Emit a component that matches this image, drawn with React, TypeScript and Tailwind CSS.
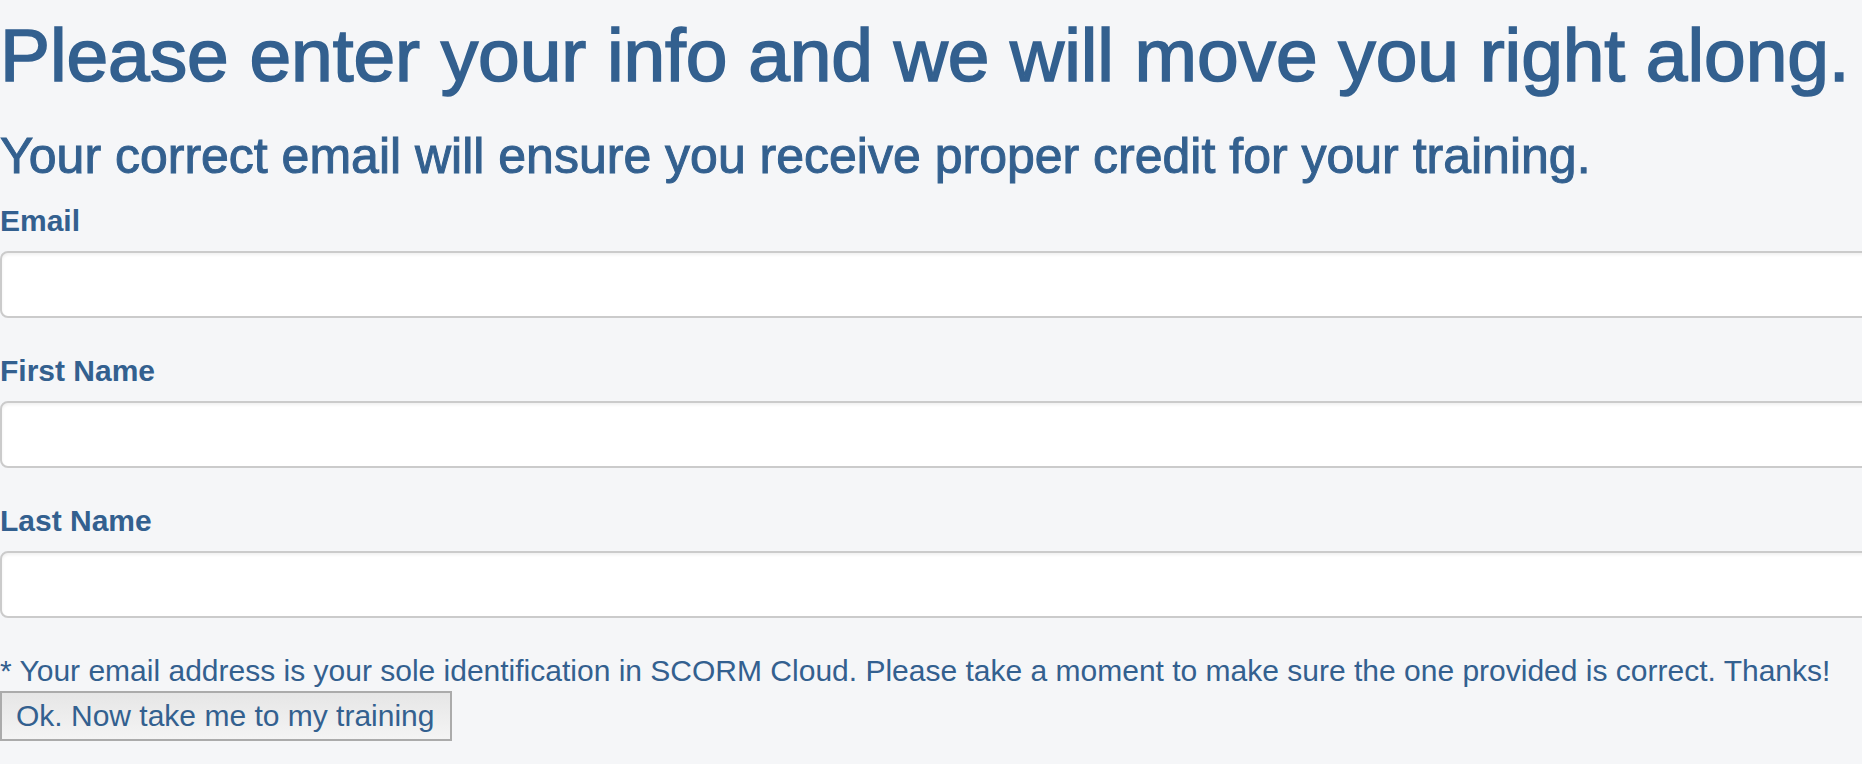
import React from 'react';

const fields = ['Email', 'First Name', 'Last Name'];

const App = () => {
  return (
    <div className="min-h-[764px] w-full overflow-hidden bg-[#f5f6f8] text-[#33608f] font-['Liberation_Sans',Arial,sans-serif]">
      <div className="pt-[14px]">
        <h1 className="text-[75px] leading-[82px] whitespace-nowrap tracking-[-0.1px] [-webkit-text-stroke:1.6px_#33608f]">
          Please enter your info and we will move you right along.
        </h1>
        <h2 className="mt-[33px] text-[50px] leading-[55px] whitespace-nowrap [-webkit-text-stroke:1px_#33608f]">
          Your correct email will ensure you receive proper credit for your training.
        </h2>

        <form className="mt-[19px] w-[1880px]" onSubmit={(e) => e.preventDefault()}>
          {fields.map((f) => (
            <div key={f} className="mb-[35px]">
              <label className="block text-[30px] leading-[36px] font-bold mb-[12px]">{f}</label>
              <input
                type="text"
                className="block w-full h-[67px] bg-white border-2 border-[#cbcbcb] rounded-[8px] shadow-[inset_0_2px_3px_rgba(0,0,0,0.06)] outline-none"
              />
            </div>
          ))}
          <p className="text-[30px] leading-[36px] whitespace-nowrap">
            * Your email address is your sole identification in SCORM Cloud. Please take a moment to make sure the one provided is correct. Thanks!
          </p>
          <button
            type="submit"
            className="mt-[2px] block h-[50px] pl-[14px] pr-[16px] text-[30px] leading-[36px] text-[#33608f] border-2 border-[#ababab] bg-gradient-to-b from-[#e6e6e6] to-[#f4f4f4]"
          >
            Ok. Now take me to my training
          </button>
        </form>
      </div>
    </div>
  );
};

export default App;
